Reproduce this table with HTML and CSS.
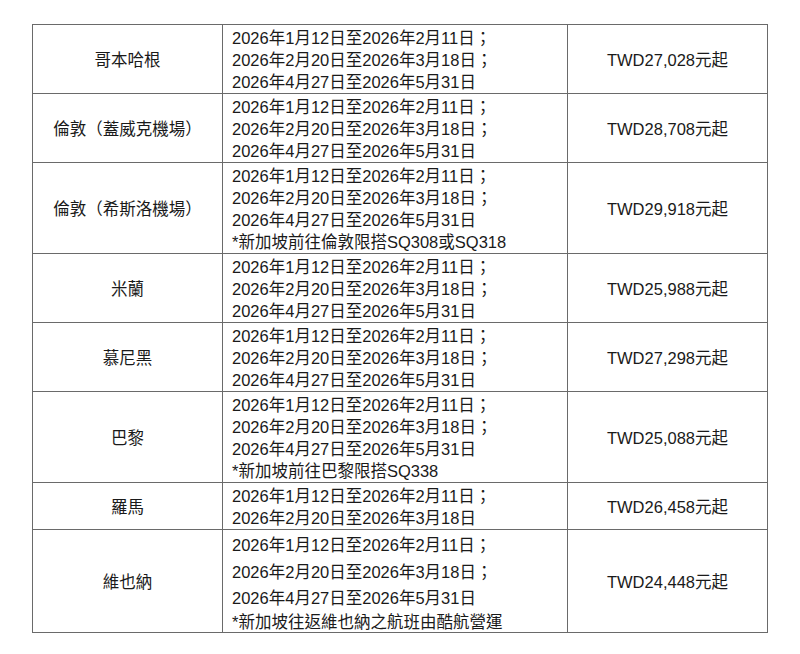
FILE: index.html
```html
<!DOCTYPE html>
<html lang="zh-Hant">
<head>
<meta charset="utf-8">
<title>票價表</title>
<link rel="stylesheet" href="styles.css">
</head>
<body>
<table class="fares">
  <colgroup>
    <col class="c-city">
    <col class="c-date">
    <col class="c-price">
  </colgroup>
  <tbody>
    <tr>
      <td class="city">哥本哈根</td>
      <td class="dates">
        <div class="ln">2026年1月12日至2026年2月11日；</div>
        <div class="ln">2026年2月20日至2026年3月18日；</div>
        <div class="ln">2026年4月27日至2026年5月31日</div>
      </td>
      <td class="price">TWD27,028元起</td>
    </tr>
    <tr>
      <td class="city">倫敦（蓋威克機場）</td>
      <td class="dates">
        <div class="ln">2026年1月12日至2026年2月11日；</div>
        <div class="ln">2026年2月20日至2026年3月18日；</div>
        <div class="ln">2026年4月27日至2026年5月31日</div>
      </td>
      <td class="price">TWD28,708元起</td>
    </tr>
    <tr>
      <td class="city">倫敦（希斯洛機場）</td>
      <td class="dates">
        <div class="ln">2026年1月12日至2026年2月11日；</div>
        <div class="ln">2026年2月20日至2026年3月18日；</div>
        <div class="ln">2026年4月27日至2026年5月31日</div>
        <div class="ln">*新加坡前往倫敦限搭SQ308或SQ318</div>
      </td>
      <td class="price">TWD29,918元起</td>
    </tr>
    <tr>
      <td class="city">米蘭</td>
      <td class="dates">
        <div class="ln">2026年1月12日至2026年2月11日；</div>
        <div class="ln">2026年2月20日至2026年3月18日；</div>
        <div class="ln">2026年4月27日至2026年5月31日</div>
      </td>
      <td class="price">TWD25,988元起</td>
    </tr>
    <tr>
      <td class="city">慕尼黑</td>
      <td class="dates">
        <div class="ln">2026年1月12日至2026年2月11日；</div>
        <div class="ln">2026年2月20日至2026年3月18日；</div>
        <div class="ln">2026年4月27日至2026年5月31日</div>
      </td>
      <td class="price">TWD27,298元起</td>
    </tr>
    <tr>
      <td class="city">巴黎</td>
      <td class="dates">
        <div class="ln">2026年1月12日至2026年2月11日；</div>
        <div class="ln">2026年2月20日至2026年3月18日；</div>
        <div class="ln">2026年4月27日至2026年5月31日</div>
        <div class="ln">*新加坡前往巴黎限搭SQ338</div>
      </td>
      <td class="price">TWD25,088元起</td>
    </tr>
    <tr>
      <td class="city">羅馬</td>
      <td class="dates">
        <div class="ln">2026年1月12日至2026年2月11日；</div>
        <div class="ln">2026年2月20日至2026年3月18日</div>
      </td>
      <td class="price">TWD26,458元起</td>
    </tr>
    <tr>
      <td class="city">維也納</td>
      <td class="dates wide">
        <div class="ln">2026年1月12日至2026年2月11日；</div>
        <div class="ln">2026年2月20日至2026年3月18日；</div>
        <div class="ln">2026年4月27日至2026年5月31日</div>
        <div class="ln note">*新加坡往返維也納之航班由酷航營運</div>
      </td>
      <td class="price">TWD24,448元起</td>
    </tr>
  </tbody>
</table>
</body>
</html>
```

FILE: styles.css
```css
html, body {
  margin: 0;
  padding: 0;
  background: #ffffff;
}

body {
  padding: 24px 0 0 32px;
  font-family: "Liberation Sans", "Noto Sans CJK TC", "Noto Sans CJK SC", sans-serif;
  font-size: 16.5px;
  color: #1a1a1a;
}

.fares {
  border-collapse: collapse;
  table-layout: fixed;
  width: 735px;
}

.c-city { width: 190px; }
.c-date { width: 345px; }
.c-price { width: 200px; }

.fares td {
  border: 1px solid #6a6a6a;
  padding: 0;
  line-height: 22px;
}

.city,
.price {
  text-align: center;
  vertical-align: middle;
  padding-top: 2px !important;
}

.dates {
  padding: 2px 0 0 9px !important;
  vertical-align: top;
  white-space: nowrap;
}

.ln {
  height: 22px;
}

.wide .ln {
  height: 26.5px;
  line-height: 26.5px;
}

.wide .ln.note {
  height: 20px;
  line-height: 20px;
}
```
